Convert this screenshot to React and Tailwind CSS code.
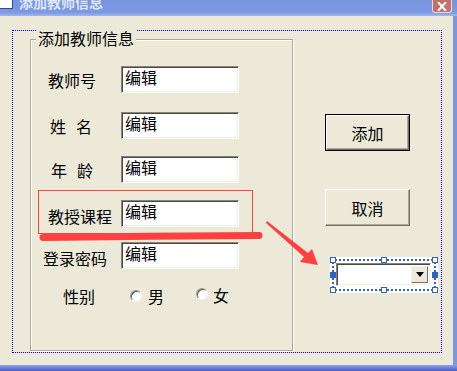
import React from 'react'

const cjk = "font-['Noto_Sans_CJK_SC','Noto_Sans',sans-serif]"

function Edit() {
  return (
    <div className="w-[118px] h-[27px] bg-white border border-t-[#868478] border-l-[#868478] border-b-white border-r-white shadow-[inset_1px_1px_0_#4a4943,inset_-1px_-1px_0_#f1efe2] pl-[3px] pt-[1px] text-[16px] leading-[18px] text-black">
      编辑
    </div>
  )
}

function Radio() {
  return (
    <div className="w-[12px] h-[12px] rounded-full bg-white border border-t-[#9a988c] border-l-[#9a988c] border-r-[#f4f3ee] border-b-[#f4f3ee] shadow-[inset_1px_1px_0_#555]" />
  )
}

function Button({ label, isDefault }) {
  return (
    <div className={isDefault ? 'w-[85px] h-[37px] border border-black' : 'w-[85px] h-[37px]'}>
      <div className="w-full h-full bg-[#ece9d8] border border-t-white border-l-white border-r-[#716f64] border-b-[#716f64] shadow-[inset_-1px_-1px_0_#aca899] flex items-center justify-center text-[16px] text-black">
        {label}
      </div>
    </div>
  )
}

function Row({ children, mt, pad, pt = 0 }) {
  return (
    <div className="flex items-center" style={{ marginTop: mt }}>
      <div className="w-[90px] text-[16px] leading-[18px] text-black" style={{ paddingLeft: pad, paddingTop: pt }}>
        {children}
      </div>
      <Edit />
    </div>
  )
}

function Handle({ className, filled }) {
  return (
    <div className={'absolute w-[6px] h-[6px] border border-[#3163c5] ' + (filled ? 'bg-[#3163c5] ' : 'bg-white ') + className} />
  )
}

function Combo() {
  return (
    <div className="relative w-[108px] h-[36px] bg-white ml-[5px] mt-[31px]">
      <div className="absolute left-[2px] top-[2px] right-[2px] bottom-[2px] border-2 border-dotted border-[#3163c5]" />
      <Handle className="left-0 top-0" />
      <Handle className="left-[51px] top-0" />
      <Handle className="right-0 top-0" />
      <Handle className="left-0 bottom-0" />
      <Handle className="left-[51px] bottom-0" />
      <Handle className="right-0 bottom-0" />
      <Handle className="left-0 top-[15px]" filled />
      <Handle className="right-0 top-[15px]" filled />
      <div className="absolute left-[6px] top-[6px] w-[95px] h-[23px] bg-white border border-t-[#868478] border-l-[#868478] border-b-white border-r-white shadow-[inset_1px_1px_0_#4a4943,inset_-1px_-1px_0_#f1efe2] flex justify-end p-[2px]">
        <div className="w-[17px] h-full bg-[#ece9d8] border border-t-[#f4f3ee] border-l-[#f4f3ee] border-r-[#716f64] border-b-[#716f64] flex items-center justify-center">
          <svg width="8" height="5" viewBox="0 0 8 5"><path d="M0 0H8L4 5Z" fill="#000" /></svg>
        </div>
      </div>
    </div>
  )
}

export default function App() {
  return (
    <div className={'relative w-[457px] h-[371px] overflow-hidden flex flex-col bg-[#ece9d8] ' + cjk}>
      {/* title bar */}
      <div className="h-[16px] flex items-start bg-[linear-gradient(to_bottom,#7893dd,#7d9ae2_80%,#a3b9ec)] overflow-hidden">
        <div className="w-[13px] h-[9px] bg-white border-r border-b border-[#34479a]" />
        <div className="ml-[6px] -mt-[6px] text-[14px] leading-[16px] font-bold text-[#dfe6f7]">添加教师信息</div>
        <div className="ml-auto mr-[5px] w-[20px] h-[13px] bg-[#c4716c] border border-t-0 border-[#ead7d6] rounded-b-[3px] flex items-center justify-center">
          <svg width="10" height="9" viewBox="0 0 10 9"><path d="M1 0L9 9M9 0L1 9" stroke="#fff" strokeWidth="2" /></svg>
        </div>
      </div>

      {/* client */}
      <div className="flex-1 border-r-4 border-[#7d97de]">
        <div className="ml-[12px] mt-[14px] w-[430px] h-[323px] border border-dotted border-[#0000ff] flex items-start">
          {/* group box */}
          <div className="relative ml-[17px] mt-[8px] w-[263px] h-[312px] border border-[#aca899] shadow-[inset_1px_1px_0_#fff,1px_1px_0_#fff] flex flex-col">
            <div className="absolute left-[5px] -top-[12px] px-[2px] bg-[#ece9d8] text-[16px] leading-[20px] text-black">添加教师信息</div>
            <Row mt={26} pad={17}>教师号</Row>
            <Row mt={19} pad={19}>
              <span className="flex gap-[10px]"><span>姓</span><span>名</span></span>
            </Row>
            <Row mt={17} pad={20}>
              <span className="flex gap-[10px]"><span>年</span><span>龄</span></span>
            </Row>
            <Row mt={17} pad={17} pt={5}>教授课程</Row>
            <Row mt={15} pad={12} pt={4}>登录密码</Row>
            <div className="flex items-center mt-[18px] text-[16px] leading-[18px] text-black">
              <span className="ml-[32px]">性别</span>
              <div className="ml-[35px]"><Radio /></div>
              <span className="ml-[6px]">男</span>
              <div className="ml-[32px] -mt-[4px]"><Radio /></div>
              <span className="ml-[5px] -mt-[2px]">女</span>
            </div>
          </div>

          {/* buttons */}
          <div className="ml-[32px] mt-[83px] flex flex-col items-start">
            <Button label="添加" isDefault />
            <div className="mt-[38px]"><Button label="取消" /></div>
            <Combo />
          </div>
        </div>
      </div>

      {/* bottom frame */}
      <div className="h-[6px] bg-[linear-gradient(to_bottom,#8ea4e6,#6a7fd6_50%,#4f5fc4)]" />

      {/* annotations */}
      <svg className="absolute left-0 top-0 pointer-events-none" width="457" height="371" viewBox="0 0 457 371">
        <rect x="38.5" y="190.5" width="214" height="43" fill="none" stroke="#ff4545" strokeWidth="1" />
        <path d="M43 237.5 Q150 236 259 235.5" fill="none" stroke="#ff4040" strokeWidth="7" strokeLinecap="round" />
        <polygon points="267,221 308,253 312,249 318,265 300,262 304,257 266,223" fill="#ff4040" />
      </svg>
    </div>
  )
}
